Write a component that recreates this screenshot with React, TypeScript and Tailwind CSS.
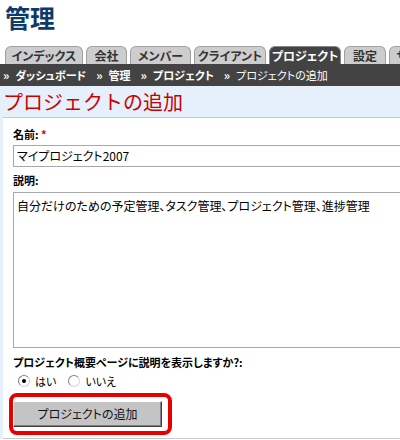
import React from 'react';

const tabs = [
  { label: 'インデックス', w: 'w-[78px]' },
  { label: '会社', w: 'w-[41px]' },
  { label: 'メンバー', w: 'w-[61px]' },
  { label: 'クライアント', w: 'w-[72px]' },
  { label: 'プロジェクト', w: 'w-[72px]', active: true },
  { label: '設定', w: 'w-[42px]' },
  { label: 'サービス', w: 'w-[60px]' },
];

const crumbs = [
  { label: 'ダッシュボード', bold: true },
  { label: '管理', bold: true },
  { label: 'プロジェクト', bold: true },
  { label: 'プロジェクトの追加', bold: false },
];

const Radio = ({ checked, label }: { checked?: boolean; label: string }) => (
  <div className="flex items-center gap-[5px]">
    <span className="flex h-[12px] w-[12px] items-center justify-center rounded-full border border-t-[#808080] border-l-[#808080] border-r-[#d4d4d4] border-b-[#d4d4d4] bg-white">
      {checked && <span className="h-[4px] w-[4px] rounded-full bg-black"></span>}
    </span>
    <span className="text-[11px] text-black">{label}</span>
  </div>
);

const App = () => {
  return (
    <div
      className="h-[440px] w-[400px] overflow-hidden bg-white"
      style={{ fontFamily: '"Noto Sans CJK JP", "Noto Sans", sans-serif', fontFeatureSettings: '"palt"' }}
    >
      <h1 className="h-[46px] pl-[5px] text-[25px] font-bold leading-[34px] text-[#0e3a6a]">管理</h1>

      {/* tabs */}
      <div className="flex h-[18px] items-end gap-[3px] whitespace-nowrap pl-[5px]">
        {tabs.map((t) => (
          <div
            key={t.label}
            className={`flex h-[18px] shrink-0 items-center justify-center rounded-t-[6px] border border-b-0 text-[12px] font-bold ${t.w} ${
              t.active ? 'border-[#888] bg-[#434343] text-white' : 'border-[#a0a0a0] bg-[#cdcdcd] text-[#333]'
            }`}
          >
            {t.label}
          </div>
        ))}
      </div>

      {/* breadcrumb */}
      <div className="flex h-[22px] items-center gap-[10px] whitespace-nowrap bg-[#434343] pl-[3px] text-[11px] text-white">
        {crumbs.map((c) => (
          <div key={c.label} className="flex items-center gap-[6px]">
            <span className="text-[12px] font-bold">»</span>
            <span className={c.bold ? 'font-bold' : ''}>{c.label}</span>
          </div>
        ))}
      </div>

      <div className="bg-[#e6f0fa] pl-[3px]">
        <h2
          className="h-[31px] pt-[2px] text-[20px] leading-[28px] text-[#cc0000]"
          style={{ fontFeatureSettings: 'normal' }}
        >
          プロジェクトの追加
        </h2>

        <div className="h-[322px] border-b border-t border-[#c8c8c8] bg-white pl-[10px] pt-[8px]">
          <div className="h-[16px] text-[11px] font-bold leading-[16px] text-black">
            名前: <span className="text-[#cc0000]">*</span>
          </div>
          <div className="mt-[3px] flex h-[22px] w-[420px] items-center border border-[#a8a8a8] pl-[3px] text-[12px] text-black">
            マイプロジェクト2007
          </div>

          <div className="mt-[5px] h-[16px] text-[11px] font-bold leading-[16px] text-black">説明:</div>
          <div className="mt-[4px] h-[156px] w-[420px] border border-[#a8a8a8] pl-[3px] pt-[4px] text-[12px] leading-[18px] text-black">
            自分だけのための予定管理、タスク管理、プロジェクト管理、進捗管理
          </div>

          <div className="mt-[6px] h-[16px] text-[11px] font-bold leading-[16px] text-black">
            プロジェクト概要ページに説明を表示しますか?:
          </div>

          <div className="mt-[3px] flex h-[16px] items-center gap-[12px] pl-[5px]">
            <Radio checked label="はい" />
            <Radio label="いいえ" />
          </div>

          <div className="-ml-[4px] mt-[4px] flex h-[42px] w-[163px] items-center rounded-[8px] border-[4px] border-[#e60000]">
            <button className="h-[26px] w-[149px] border border-b-[#404040] border-l-white border-r-[#404040] border-t-white bg-[#c4c4c4] text-[12px] text-[#111] shadow-[inset_-1px_-1px_0_#808080]">
              プロジェクトの追加
            </button>
          </div>
        </div>
      </div>
    </div>
  );
};

export default App;
